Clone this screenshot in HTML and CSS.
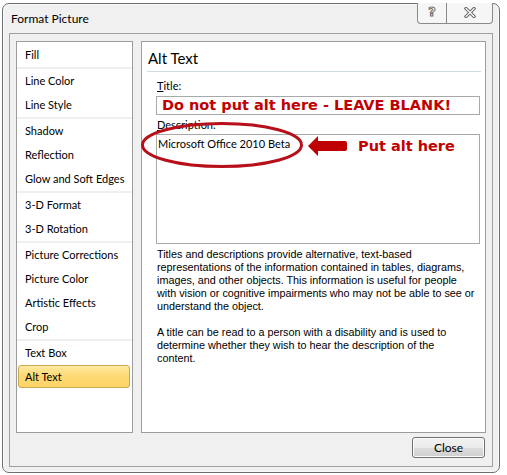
FILE: index.html
```html
<!DOCTYPE html>
<html>
<head>
<meta charset="utf-8">
<title>Format Picture</title>
<link rel="stylesheet" href="styles.css">
</head>
<body>
<div class="window">
  <div class="titlebar">
    <span class="title">Format Picture</span>
    <div class="caption-btns">
      <div class="cbtn help"><span class="qmark">?</span></div>
      <div class="cbtn xbtn">
        <svg width="12" height="11" viewBox="0 0 12 11">
          <path d="M2 1.5 L10 9.5 M10 1.5 L2 9.5" stroke="#6d6d6d" stroke-width="3.2" stroke-linecap="square" fill="none"/>
          <path d="M2 1.5 L10 9.5 M10 1.5 L2 9.5" stroke="#ffffff" stroke-width="1.2" stroke-linecap="square" fill="none"/>
        </svg>
      </div>
    </div>
  </div>
  <div class="client">
    <div class="panes">
      <ul class="nav">
        <li class="item">Fill</li>
        <li class="sep"></li>
        <li class="item">Line Color</li>
        <li class="item">Line Style</li>
        <li class="sep"></li>
        <li class="item">Shadow</li>
        <li class="item">Reflection</li>
        <li class="item">Glow and Soft Edges</li>
        <li class="sep"></li>
        <li class="item">3-D Format</li>
        <li class="item">3-D Rotation</li>
        <li class="sep"></li>
        <li class="item">Picture Corrections</li>
        <li class="item">Picture Color</li>
        <li class="item">Artistic Effects</li>
        <li class="item">Crop</li>
        <li class="sep"></li>
        <li class="item">Text Box</li>
        <li class="item selected">Alt Text</li>
      </ul>
      <div class="content">
        <div class="heading">Alt Text</div>
        <div class="form">
          <div class="label"><u>T</u>itle:</div>
          <div class="field title-field">Do not put alt here - LEAVE BLANK!</div>
          <div class="label"><u>D</u>escription:</div>
          <div class="field desc-field">Microsoft Office 2010 Beta</div>
          <p class="help-text">Titles and descriptions provide alternative, text-based<br>representations of the information contained in tables, diagrams,<br>images, and other objects. This information is useful for people<br>with vision or cognitive impairments who may not be able to see or<br>understand the object.</p>
          <p class="help-text">A title can be read to a person with a disability and is used to<br>determine whether they wish to hear the description of the<br>content.</p>
        </div>
        <svg class="oval" width="166" height="52" viewBox="0 0 166 52">
          <ellipse cx="82" cy="25" rx="79.5" ry="21.5" fill="none" stroke="#b8101a" stroke-width="3"/>
        </svg>
        <svg class="arrow" width="44" height="24" viewBox="0 0 44 24">
          <path d="M2 12 L12 2 L12 7 L39 7 Q41 7 41 9 L41 15 Q41 17 39 17 L12 17 L12 22 Z" fill="#c00000"/>
        </svg>
        <span class="callout">Put alt here</span>
      </div>
    </div>
    <div class="buttons">
      <button class="btn">Close</button>
    </div>
  </div>
</div>
</body>
</html>
```
FILE: styles.css
```css
* { box-sizing: border-box; }
html, body { margin: 0; padding: 0; background: #ffffff; }
body {
  font-family: "Lato", "Liberation Sans", sans-serif;
  font-size: 11px;
  color: #000;
}
.window {
  margin: 3px 0 0 2px;
  width: 498px;
  height: 470px;
  border: 1px solid #6e6e6e;
  border-radius: 7px;
  background: #f0f0f0;
  box-shadow: inset 0 0 0 1px #fafafa;
  padding: 0 6px 5px 6px;
  display: flex;
  flex-direction: column;
}
.titlebar {
  height: 29px;
  display: flex;
  align-items: flex-start;
  flex: none;
}
.title {
  margin: 8px 0 0 2px;
  line-height: 14px;
  font-size: 12px;
}
.caption-btns {
  margin-left: auto;
  margin-top: -1px;
  display: flex;
  height: 21px;
  border: 1px solid #8a8a8a;
  border-top: none;
  border-radius: 0 0 4px 4px;
  background: #f6f6f6;
}
.cbtn {
  display: flex;
  align-items: center;
  justify-content: center;
}
.help { width: 29px; border-right: 1px solid #8a8a8a; }
.xbtn { width: 45px; }
.qmark {
  font-family: "DejaVu Sans", sans-serif;
  font-weight: bold;
  font-size: 13px;
  color: #fff;
  -webkit-text-stroke: 1px #6d6d6d;
  line-height: 14px;
  margin-top: -2px;
}
.xbtn svg { margin-top: -2px; }
.client {
  height: 434px;
  border: 1px solid #a0a0a0;
  padding: 7px 6px 0 6px;
  display: flex;
  flex-direction: column;
}
.panes {
  display: flex;
  gap: 8px;
  height: 392px;
  flex: none;
}
.nav {
  list-style: none;
  margin: 0;
  width: 117px;
  flex: none;
  background: #fff;
  border: 1px solid #9c9c9c;
  padding: 1px 2px 0 1px;
}
.item {
  height: 24px;
  line-height: 22px;
  padding-left: 6px;
  border: 1px solid transparent;
  white-space: nowrap;
}
.sep {
  height: 2px;
  background: #efefef;
  margin: 0 -2px 0 -1px;
}
.selected {
  height: 23px;
  line-height: 21px;
  background: linear-gradient(#fee9a0, #fdd873 50%, #fdd466);
  border-color: #c9a854;
  border-radius: 3px;
}
.content {
  flex: 1;
  position: relative;
  background: #fff;
  border: 1px solid #9c9c9c;
}
.heading {
  margin: 0 4px 0 5px;
  padding: 6px 0 3px 1px;
  font-size: 15px;
  line-height: 20px;
  border-bottom: 1px solid #cfdce2;
}
.form {
  padding: 0 5px 0 14px;
}
.label {
  line-height: 14px;
  padding-left: 1px;
  margin-top: 7px;
}
.label + .field { margin-top: 3px; }
.field {
  border: 1px solid #a9a9a9;
  background: #fff;
}
.title-field {
  height: 19px;
  padding-left: 5px;
  font-family: "DejaVu Sans", sans-serif;
  font-weight: bold;
  font-size: 14.5px;
  line-height: 17px;
  color: #c00000;
  white-space: nowrap;
}
.title-field + .label { margin-top: 3px; }
.desc-field {
  height: 110px;
  padding: 2px 0 0 1px;
  line-height: 14px;
  font-size: 11px;
}
.label + .desc-field { margin-top: 2px; }
.help-text {
  margin: 4px 0 13px 0;
  padding-left: 1px;
  font-family: "Liberation Sans", sans-serif;
  font-size: 10.8px;
  line-height: 13px;
  white-space: nowrap;
}
.oval {
  position: absolute;
  left: -2px;
  top: 78px;
  overflow: visible;
}
.arrow {
  position: absolute;
  left: 164px;
  top: 92px;
}
.callout {
  position: absolute;
  left: 216px;
  top: 95px;
  font-family: "DejaVu Sans", sans-serif;
  font-weight: bold;
  font-size: 14.5px;
  line-height: 18px;
  color: #c00000;
  white-space: nowrap;
}
.buttons {
  display: flex;
  justify-content: flex-end;
  padding-right: 1px;
  margin-top: 4px;
}
.btn {
  width: 73px;
  height: 21px;
  margin: 0;
  padding: 0;
  font-family: "Lato", "Liberation Sans", sans-serif;
  font-size: 12px;
  color: #000;
  border: 1px solid #707070;
  border-radius: 3px;
  background: linear-gradient(#f2f2f2, #ebebeb 50%, #dddddd 51%, #cfcfcf);
  box-shadow: inset 0 0 0 1px #fcfcfc;
}
```
